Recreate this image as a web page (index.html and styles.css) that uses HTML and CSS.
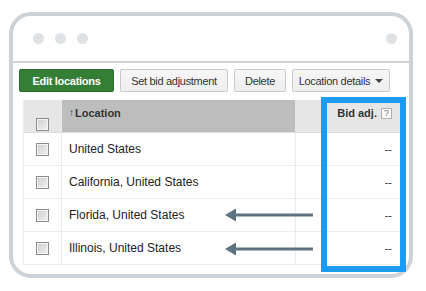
FILE: index.html
```html
<!DOCTYPE html>
<html>
<head>
<meta charset="utf-8">
<link rel="stylesheet" href="styles.css">
</head>
<body>
<div class="frame">
  <div class="titlebar">
    <span class="dot"></span><span class="dot"></span><span class="dot"></span>
    <span class="spacer"></span>
    <span class="dot"></span>
  </div>
  <div class="content">
    <div class="toolbar">
      <button class="btn btn-primary btn-edit">Edit locations</button>
      <button class="btn btn-bid">Set bid adjustment</button>
      <button class="btn btn-delete">Delete</button>
      <button class="btn btn-details">Location details <span class="caret"></span></button>
    </div>
    <table class="grid">
      <thead>
        <tr>
          <th class="c-check"><span class="checkbox"></span></th>
          <th class="c-loc sorted"><span class="sort">&#8593;</span>Location</th>
          <th class="c-blank"></th>
          <th class="c-bid">Bid adj. <span class="help">?</span></th>
        </tr>
      </thead>
      <tbody>
        <tr>
          <td class="c-check"><span class="checkbox"></span></td>
          <td class="c-loc">United States</td>
          <td class="c-blank"></td>
          <td class="c-bid">--</td>
        </tr>
        <tr>
          <td class="c-check"><span class="checkbox"></span></td>
          <td class="c-loc">California, United States</td>
          <td class="c-blank"></td>
          <td class="c-bid">--</td>
        </tr>
        <tr>
          <td class="c-check"><span class="checkbox"></span></td>
          <td class="c-loc">Florida, United States</td>
          <td class="c-blank"></td>
          <td class="c-bid">--</td>
        </tr>
        <tr>
          <td class="c-check"><span class="checkbox"></span></td>
          <td class="c-loc">Illinois, United States</td>
          <td class="c-blank"></td>
          <td class="c-bid">--</td>
        </tr>
      </tbody>
    </table>
  </div>
  <div class="highlight"></div>
  <svg class="arrow arrow-1" width="90" height="14" viewBox="0 0 90 14">
    <line x1="9" y1="7" x2="88" y2="7" stroke="#5e7482" stroke-width="3"/>
    <polygon points="0,7 11,0.5 11,13.5" fill="#5e7482"/>
  </svg>
  <svg class="arrow arrow-2" width="90" height="14" viewBox="0 0 90 14">
    <line x1="9" y1="7" x2="88" y2="7" stroke="#5e7482" stroke-width="3"/>
    <polygon points="0,7 11,0.5 11,13.5" fill="#5e7482"/>
  </svg>
</div>
</body>
</html>
```
FILE: styles.css
```css
html, body {
  margin: 0;
  padding: 0;
  background: #ffffff;
}
body {
  font-family: "Liberation Sans", Arial, sans-serif;
  color: #222;
}
.frame {
  position: relative;
  box-sizing: border-box;
  margin: 12px 0 0 9px;
  width: 404px;
  height: 266px;
  border: 4px solid #cdd2d7;
  border-radius: 22px;
  background: #fff;
}
.titlebar {
  height: 45px;
  border-bottom: 2px solid #cfd4d8;
  display: flex;
  align-items: center;
  gap: 11px;
  padding: 0 12px 0 20px;
}
.dot {
  width: 11px;
  height: 11px;
  border-radius: 50%;
  background: #dfe2e5;
}
.spacer {
  flex: 1;
}
.content {
  padding: 6px 8px 0 6px;
}
.toolbar {
  display: flex;
  gap: 6px;
  height: 23px;
}
.btn {
  box-sizing: border-box;
  height: 23px;
  border: 1px solid #c9c9c9;
  border-radius: 2px;
  background: linear-gradient(#f6f6f6, #eeeeee);
  color: #333;
  font-family: "Liberation Sans", Arial, sans-serif;
  font-size: 11px;
  letter-spacing: -0.3px;
  padding: 0;
  display: flex;
  align-items: center;
  justify-content: center;
}
.btn-primary {
  background: #347e36;
  border-color: #2c6c2e;
  color: #fff;
  font-weight: bold;
}
.btn-edit { width: 95px; }
.btn-bid { width: 108px; }
.btn-delete { width: 52px; }
.btn-details { width: 98px; gap: 5px; }
.caret {
  width: 0;
  height: 0;
  border-left: 4px solid transparent;
  border-right: 4px solid transparent;
  border-top: 4px solid #444;
  margin-top: 1px;
}
.grid {
  margin: 8px 0 0 4px;
  width: 378px;
  border-collapse: separate;
  border-spacing: 0;
  table-layout: fixed;
  font-size: 12px;
}
.grid th, .grid td {
  padding: 0;
  height: 32px;
  border-bottom: 1px solid #ececec;
}
.grid th {
  background: #e6e6e6;
  font-size: 11px;
  font-weight: bold;
  color: #333;
  vertical-align: top;
  padding-top: 7px;
  height: 25px;
  border-bottom: 1px solid #dcdcdc;
}
.grid th.sorted {
  background: #bdbdbd;
}
.c-check {
  width: 37px;
  text-align: center;
  border-left: 1px solid #ececec;
}
.grid th.c-check {
  padding-top: 18px;
  height: 14px;
}
.c-loc {
  width: 234px;
  text-align: left;
  padding-left: 7px !important;
  box-sizing: border-box;
  border-left: 1px solid #ececec;
}
.grid th.c-loc {
  padding-left: 7px;
}
.sort {
  font-size: 10px;
  margin-right: 1px;
  position: relative;
  top: -1px;
}
.c-blank {
  width: 34px;
  border-left: 1px solid #ececec;
}
.grid th.c-blank {
  border-left-color: #e6e6e6;
}
.c-bid {
  width: 73px;
  text-align: right;
  padding-right: 11px !important;
  box-sizing: border-box;
  color: #333;
}
.grid td.c-bid {
  font-size: 11px;
}
.help {
  display: inline-block;
  box-sizing: border-box;
  width: 11px;
  height: 11px;
  border: 1px solid #b0b0b0;
  background: #fafafa;
  color: #777;
  font-size: 9px;
  font-weight: normal;
  line-height: 9px;
  text-align: center;
  vertical-align: top;
  margin-left: 1px;
  margin-top: 1px;
}
.checkbox {
  display: inline-block;
  box-sizing: border-box;
  width: 13px;
  height: 13px;
  border: 1px solid #8c8c8c;
  background: linear-gradient(135deg, #cdcdcd, #f2f2f2);
  box-shadow: inset 0 0 0 1px #f4f4f4;
  vertical-align: middle;
}
.grid th .checkbox {
  vertical-align: top;
}
.highlight {
  position: absolute;
  left: 308px;
  top: 81px;
  width: 85px;
  height: 175px;
  box-sizing: border-box;
  border: 6px solid #1d9bf0;
}
.arrow {
  position: absolute;
  left: 212px;
}
.arrow-1 { top: 192px; }
.arrow-2 { top: 226px; }
```
